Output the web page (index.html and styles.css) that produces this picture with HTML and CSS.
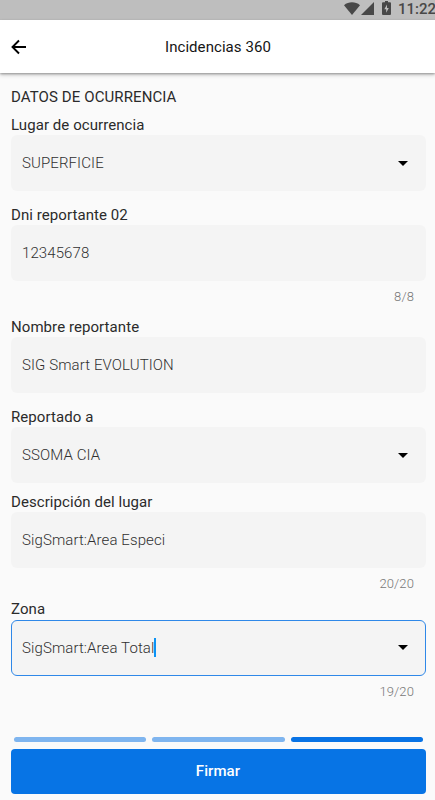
FILE: index.html
```html
<!DOCTYPE html>
<html lang="es"><head><meta charset="utf-8"><title>Incidencias 360</title><link rel="stylesheet" href="styles.css"></head>
<body>
<div class="status">
<svg class="wifi" width="16" height="13" viewBox="0 0 16 13"><path d="M0 3.2C4.6-.6 11.4-.6 16 3.2L8 13z"/></svg>
<svg class="signal" width="13" height="13" viewBox="0 0 13 13"><path d="M13 0v13H0z"/></svg>
<svg class="battery" width="9" height="14" viewBox="0 0 9 14"><path fill-rule="evenodd" d="M3 0h3v1.300h2q1 0 1 1V13q0 1-1 1H1q-1 0-1-1V2.300q0-1 1-1h2zM5 3.500 2.300 8.300h1.900v3.500l2.600-4.800H5z"/></svg>
<span class="time">11:22</span>
</div>
<header class="bar"><svg class="back" width="16" height="16" viewBox="0 0 16 16"><path d="M15 8H2M8 1.500 1.500 8 8 14.500"/></svg><h1>Incidencias 360</h1></header>
<main>
<h2>DATOS DE OCURRENCIA</h2>
<section class="group g1"><label>Lugar de ocurrencia</label><div class="field"><span>SUPERFICIE</span><i class="caret"></i></div></section>
<section class="group g2"><label>Dni reportante 02</label><div class="field"><span>12345678</span></div><small>8/8</small></section>
<section class="group g3"><label>Nombre reportante</label><div class="field"><span>SIG Smart EVOLUTION</span></div></section>
<section class="group g4"><label>Reportado a</label><div class="field"><span>SSOMA CIA</span><i class="caret"></i></div></section>
<section class="group g5"><label>Descripción del lugar</label><div class="field"><span>SigSmart:Area Especi</span></div><small>20/20</small></section>
<section class="group g6"><label>Zona</label><div class="field active"><span>SigSmart:Area Total</span><b class="cursor"></b><i class="caret"></i></div><small>19/20</small></section>
</main>
<footer><div class="steps"><i></i><i></i><i class="on"></i></div><button>Firmar</button></footer>
</body></html>
```
FILE: styles.css
```css
*{box-sizing:border-box}
body{margin:0;width:435px;height:800px;overflow:hidden;background:#fafafa;font-family:Roboto,sans-serif;color:#2b2b2b;display:flex;flex-direction:column}
.status{height:20px;flex:none;background:#bebebe;display:flex;justify-content:flex-end;align-items:flex-start;color:#484848;fill:#484848}
.wifi{margin:2px 1px 0 0}
.signal{margin:2px 8px 0 0}
.battery{margin:1px 7px 0 0}
.time{font-size:15px;font-weight:500;line-height:19px;width:37px;white-space:nowrap}
.bar{height:53px;flex:none;background:#fff;box-shadow:0 1px 2px rgba(0,0,0,.28),0 2px 4px rgba(0,0,0,.2);display:flex;align-items:center;padding-left:11px}
.back{fill:none;stroke:#000;stroke-width:1.9}
h1{font-size:15px;font-weight:400;line-height:20px;margin:0 0 0 138px;color:#151515;letter-spacing:.06px}
main{padding:15px 9px 0 11px;flex:1}
h2{font-size:15px;font-weight:400;line-height:18px;margin:0 0 9px;letter-spacing:.1px}
label{display:block;font-size:15px;line-height:20px;letter-spacing:.07px}
.field{height:56px;background:#f4f4f4;border-radius:6px;padding:0 18px 0 11px;display:flex;align-items:center;font-size:15px;font-weight:300;color:#303030;letter-spacing:.1px}
.active{border:1px solid #2f88e8;padding:0 17px 0 10px;margin-top:.5px}
.caret{margin-left:auto;border:5px solid transparent;border-top-color:#000;border-bottom:0}
.cursor{width:2px;height:19px;background:#0b93f5}
small{display:block;text-align:right;font-size:13px;font-weight:300;line-height:16px;margin:8px 12px 0 0;color:#777;letter-spacing:.1px}
.g1{height:90px}.g2{height:112px}.g3{height:90px}.g4{height:85px}.g5{height:107px}
footer{height:64px;padding:0 9px 0 11px;flex:none}
.steps{display:flex;gap:6px;padding:0 3px 0 2.500px;height:13px;align-items:flex-start}
.steps i{height:5px;border-radius:3px;flex:1;background:#7fb5ef;margin-top:1px}
.steps .on{background:#0873e5}
button{display:block;width:100%;height:45px;background:#0774e5;border:0;border-radius:4px;color:#fff;font:500 15px Roboto,sans-serif;padding:0 1px 1px 0;letter-spacing:.1px}
```
